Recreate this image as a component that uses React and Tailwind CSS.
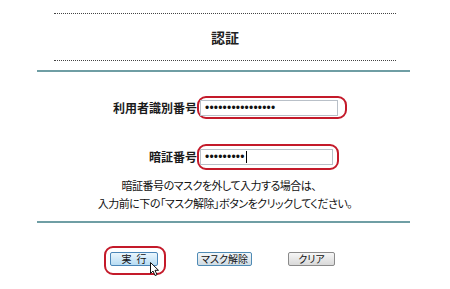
import React from "react";

const jp = "font-['Noto_Sans_CJK_JP','Noto_Sans',sans-serif]";

const Cursor = () => (
  <svg
    width="10"
    height="15"
    viewBox="0 0 10 15"
    className="absolute left-[44px] top-[14px]"
  >
    <path
      d="M0.5 0.5 L0.5 11.5 L3 9 L5 13.5 L7 12.7 L5 8.3 L8.5 8.3 Z"
      fill="#fff"
      stroke="#111"
      strokeWidth="1"
      strokeLinejoin="miter"
    />
  </svg>
);

const Field = ({ label, dots, caret, boxClass, inputClass }) => (
  <div className="flex items-center">
    <div className="w-[197px] text-right text-[12px] font-bold text-[#1a1a1a] leading-none">
      {label}
    </div>
    <div
      className={`flex items-center border-2 border-[#c41a2a] rounded-[9px] pl-[1px] ${boxClass}`}
    >
      <div
        className={`flex items-center h-[16px] bg-white border border-[#b9c0c8] pl-[4px] font-['Liberation_Sans',sans-serif] text-[12px] leading-none text-[#111] ${inputClass}`}
      >
        <span className="tracking-[0.2px]">{"•".repeat(dots)}</span>
        {caret && <span className="w-[1px] h-[12px] bg-black ml-[1px]" />}
      </div>
    </div>
  </div>
);

export default function App() {
  return (
    <div className={`w-[450px] h-[289px] bg-white overflow-hidden ${jp}`}>
      {/* header */}
      <div className="pt-[13px] flex flex-col items-center">
        <div className="w-[342px] border-t border-dotted border-[#444]" />
        <div className="h-[46px] flex items-center justify-center text-[14px] font-bold text-[#222]">
          認証
        </div>
        <div className="w-[342px] border-t border-dotted border-[#444]" />
      </div>
      <div className="mt-[9px] ml-[37px] w-[373px] h-[2px] bg-[#6f9ea4]" />

      {/* fields */}
      <div className="mt-[24px]">
        <Field
          label="利用者識別番号"
          dots={16}
          boxClass="w-[150px] h-[23px]"
          inputClass="w-[138px]"
        />
      </div>
      <div className="mt-[25px]">
        <Field
          label="暗証番号"
          dots={9}
          caret
          boxClass="w-[142px] h-[26px]"
          inputClass="w-[133px]"
        />
      </div>

      {/* note */}
      <div className="mt-[6px] text-center text-[11px] leading-[18px] text-[#111] tracking-[-0.5px] [font-feature-settings:'palt']">
        <p className="pr-[12px]">暗証番号のマスクを外して入力する場合は、</p>
        <p>入力前に下の「マスク解除」ボタンをクリックしてください。</p>
      </div>
      <div className="mt-[9px] ml-[37px] w-[373px] h-[2px] bg-[#6f9ea4]" />

      {/* buttons */}
      <div className="mt-[23px] flex items-center">
        <div className="relative ml-[104px] w-[62px] h-[29px] border-2 border-[#c41a2a] rounded-[9px] flex items-center justify-center pr-[2px] pb-[3px]">
          <button className="w-[48px] h-[14px] flex items-center justify-center rounded-[2px] border border-[#4a86b8] bg-gradient-to-b from-[#eaf6fd] to-[#b7dcf3] text-[10px] leading-none text-[#111] tracking-[5px] pl-[5px]">
            実行
          </button>
          <Cursor />
        </div>
        <button className="ml-[31px] mb-[3px] w-[55px] h-[14px] flex items-center justify-center rounded-[2px] border border-[#4f8bb5] bg-gradient-to-b from-[#f4f7f9] to-[#cfdbe3] text-[10px] leading-none text-[#111] [font-feature-settings:'palt']">
          マスク解除
        </button>
        <button className="ml-[36px] mb-[3px] w-[47px] h-[14px] flex items-center justify-center rounded-[2px] border border-[#8a8a8a] bg-gradient-to-b from-[#f6f6f6] to-[#d9d9d9] text-[10px] leading-none text-[#111] [font-feature-settings:'palt']">
          クリア
        </button>
      </div>
    </div>
  );
}
